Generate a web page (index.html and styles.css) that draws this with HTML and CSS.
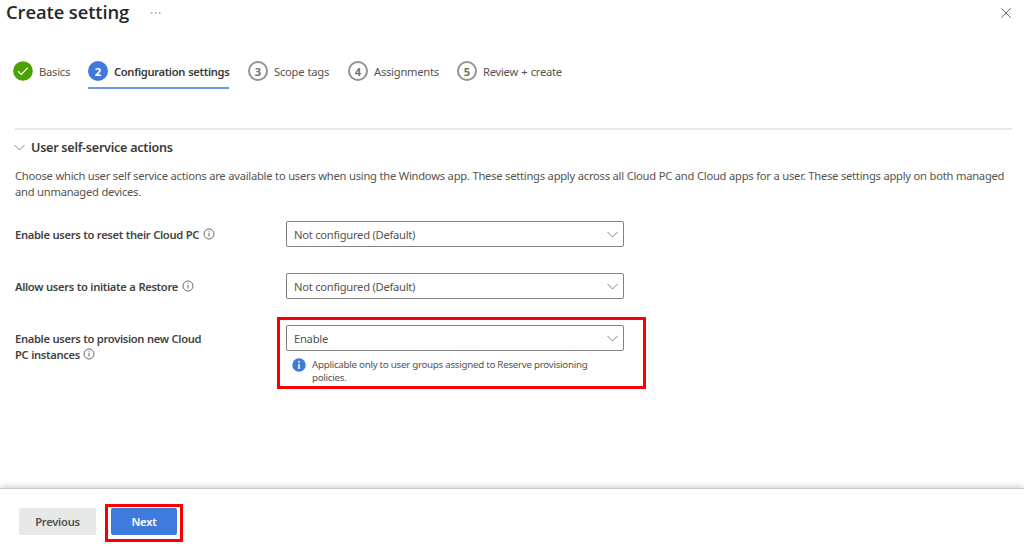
FILE: index.html
```html
<!DOCTYPE html>
<html lang="en">
<head>
    <meta charset="UTF-8">
    <meta name="viewport" content="width=device-width, initial-scale=1.0">
    <title>Create setting</title>
    <link rel="stylesheet" href="styles.css">
</head>

<body>

<div class="page">
    <!-- Title bar -->
    <header class="header">
        <h1>Create setting</h1>
        <svg class="more" viewBox="0 0 10 2"><path d="M0 1h1.5M4 1h1.5M8 1h1.5"/></svg>
        <svg class="close" viewBox="0 0 10 10"><path d="M.3.3l9.4 9.4M9.7.3L.3 9.7"/></svg>
    </header>

    <!-- Wizard steps -->
    <nav class="steps">
        <div class="step basics">
            <svg class="check" viewBox="0 0 20 20"><circle cx="10" cy="10" r="9.8"/><path d="M5 10.3l3.3 3.2 6.6-6.8"/></svg>
            <span>Basics</span>
        </div>
        <div class="step active"><b class="num">2</b><span>Configuration settings</span></div>
        <div class="step scope"><b class="num">3</b><span>Scope tags</span></div>
        <div class="step assign"><b class="num">4</b><span>Assignments</span></div>
        <div class="step review"><b class="num">5</b><span>Review + create</span></div>
    </nav>

    <main class="content">
        <div class="section-title">
            <svg class="chevron" viewBox="0 0 11 7"><path d="M.5 1l5 5 5-5"/></svg>
            <h2>User self-service actions</h2>
        </div>
        <p class="description">
            <span>Choose which user self service actions are available to users when using the Windows app. These settings apply across all Cloud PC and Cloud apps for a user. These settings apply on both managed</span><br>
            <span>and unmanaged devices.</span>
        </p>

        <div class="row">
            <div class="label"><span>Enable users to reset their Cloud PC</span><svg class="info" viewBox="0 0 12 12"><circle cx="6" cy="6" r="5"/><path d="M6 5v3.6M6 3.2v1"/></svg></div>
            <div class="select"><span>Not configured (Default)</span><svg class="chevron" viewBox="0 0 11 7"><path d="M.5 1l5 5 5-5"/></svg></div>
        </div>
        <div class="row">
            <div class="label"><span>Allow users to initiate a Restore</span><svg class="info" viewBox="0 0 12 12"><circle cx="6" cy="6" r="5"/><path d="M6 5v3.6M6 3.2v1"/></svg></div>
            <div class="select"><span>Not configured (Default)</span><svg class="chevron" viewBox="0 0 11 7"><path d="M.5 1l5 5 5-5"/></svg></div>
        </div>
        <div class="row">
            <div class="label two-lines"><span>Enable users to provision new Cloud<br>PC instances</span><svg class="info" viewBox="0 0 12 12"><circle cx="6" cy="6" r="5"/><path d="M6 5v3.6M6 3.2v1"/></svg></div>
            <div class="field">
                <div class="select"><span>Enable</span><svg class="chevron" viewBox="0 0 11 7"><path d="M.5 1l5 5 5-5"/></svg></div>
                <div class="note">
                    <svg class="note-icon" viewBox="0 0 14 14"><circle cx="7" cy="7" r="6.7"/><path d="M7 6v5M7 3v1.8"/></svg>
                    <span>Applicable only to user groups assigned to Reserve provisioning<br>policies.</span>
                </div>
                <div class="highlight"></div>
            </div>
        </div>
    </main>

    <!-- Bottom buttons -->
    <footer class="footer">
        <button type="button" class="previous">Previous</button>
        <div class="next-wrap">
            <button type="button" class="next">Next</button>
        </div>
    </footer>
</div>

</body>
</html>
```
FILE: styles.css
```css
* {
    box-sizing: border-box;
}

body {
    margin: 0;
    background: #fff;
    color: #55534f;
    font-family: "Noto Sans", "Open Sans", sans-serif;
    font-size: 11.2px;
    letter-spacing: -0.26px;
    overflow: hidden;
}

.page {
    display: flex;
    flex-direction: column;
    height: 547px;
}

svg {
    display: block;
    flex: none;
    fill: none;
    stroke: #6b6966;
    stroke-width: 1;
}

span {
    white-space: nowrap;
}

/* Title bar */
.header {
    display: flex;
    height: 61px;
    padding-left: 6px;
}

h1 {
    width: 123px;
    margin: 0;
    color: #292827;
    font-family: "Open Sans", sans-serif;
    font-size: 18.4px;
    font-weight: 600;
    letter-spacing: -0.1px;
    line-height: 24px;
    white-space: nowrap;
}

.more {
    width: 10px;
    height: 2px;
    margin: 12px 0 0 22px;
}

.close {
    width: 10px;
    height: 10px;
    margin: 8px 13px 0 auto;
}

/* Wizard steps */
.steps {
    display: flex;
    gap: 19px;
    height: 67px;
    padding-left: 13px;
}

.step {
    display: flex;
    align-items: center;
    gap: 6px;
    height: 28px;
    padding-bottom: 8px;
}

.basics { width: 56px; }
.scope { width: 81px; }
.assign { width: 90px; }
.review { width: 106px; }

.step span {
    letter-spacing: -0.25px;
    word-spacing: 0.6px;
}

.check {
    width: 20px;
    height: 20px;
}

.check circle {
    fill: #4aa303;
    stroke: none;
}

.check path {
    stroke: #fff;
    stroke-width: 1.2;
}

.num {
    display: flex;
    flex: none;
    align-items: center;
    justify-content: center;
    width: 20px;
    height: 20px;
    border: 2px solid #959390;
    border-radius: 50%;
    color: #73716e;
    font-weight: 700;
    letter-spacing: 0;
}

.step.active {
    width: 141px;
    border-bottom: 2px solid #6c98e3;
    padding-bottom: 6px;
    color: #3b3a38;
    font-weight: 600;
}

.step.active span {
    letter-spacing: -0.35px;
}

.active .num {
    border-color: #3f7bdc;
    background: #3f7bdc;
    color: #fff;
}

/* Form */
.content {
    flex: 1;
    margin: 0 12px 0 15px;
    border-top: 2px solid #e8e8e8;
}

.section-title {
    display: flex;
    align-items: center;
    gap: 6px;
    height: 34px;
    margin-left: -1px;
}

h2 {
    margin: 0;
    color: #3b3a38;
    font-size: 12.6px;
    font-weight: 600;
    letter-spacing: -0.27px;
    white-space: nowrap;
}

.chevron {
    width: 11px;
    height: 7px;
    stroke: #83817e;
}

.description {
    height: 53px;
    margin: 4px 0 0;
    line-height: 15.5px;
    word-spacing: 0.18px;
}

.row {
    display: flex;
    height: 52px;
}

.label {
    display: flex;
    gap: 4px;
    align-items: center;
    width: 271px;
    height: 26px;
    color: #454341;
    font-weight: 600;
    letter-spacing: -0.34px;
    word-spacing: 0.3px;
}

.two-lines {
    position: relative;
    height: 43px;
    line-height: 16px;
}

.info {
    width: 12px;
    height: 12px;
}

/* Icon follows the second line of the label */
.two-lines .info {
    position: absolute;
    left: 68px;
    top: 23px;
}

.select {
    display: flex;
    align-items: center;
    justify-content: space-between;
    width: 338px;
    height: 26px;
    padding: 0 5px 0 7px;
    border: 1px solid #83817e;
    border-radius: 2px;
}

.field {
    position: relative;
}

.note {
    display: flex;
    gap: 6px;
    margin: 7px 0 0 6px;
    font-size: 9.8px;
    letter-spacing: -0.29px;
    line-height: 13px;
}

.note-icon {
    width: 14px;
    height: 14px;
}

.note-icon circle {
    fill: #3f7bdc;
    stroke: none;
}

.note-icon path {
    stroke: #fff;
    stroke-width: 1.6;
}

.highlight {
    position: absolute;
    left: -9px;
    top: -8px;
    width: 369px;
    height: 72px;
    border: 3px solid #f80000;
}

/* Bottom buttons */
.footer {
    display: flex;
    gap: 9px;
    height: 59px;
    padding: 15px 0 0 19px;
    border-top: 1px solid #c8caca;
    box-shadow: 0 -1px 7px rgba(0, 0, 0, 0.22);
}

button {
    height: 27px;
    padding: 0 0 1px;
    border: none;
    border-radius: 2px;
    font-family: inherit;
    font-size: 11.2px;
    font-weight: 600;
    letter-spacing: -0.25px;
}

.previous {
    width: 77px;
    margin-top: 4px;
    background: #e7e8e8;
    color: #555350;
}

.next-wrap {
    width: 78px;
    height: 38px;
    padding: 1px 3px;
    border: 3px solid #f80000;
}

.next {
    width: 66px;
    background: #3f7bdc;
    color: #fff;
}
```
